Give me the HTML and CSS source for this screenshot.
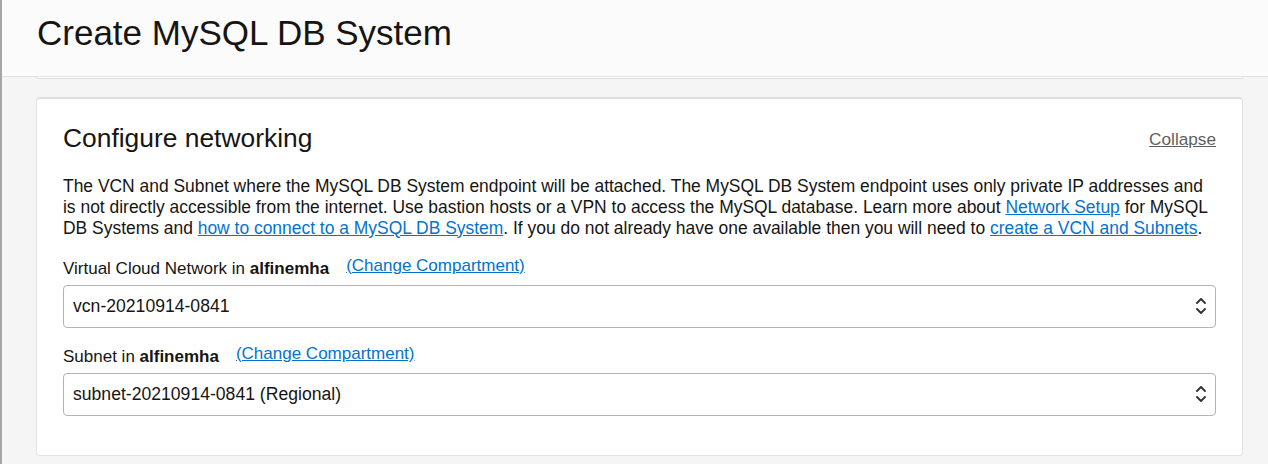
FILE: index.html
```html
<!DOCTYPE html>
<html lang="en">
<head>
<meta charset="utf-8">
<title>Create MySQL DB System</title>
<link rel="stylesheet" href="styles.css">
</head>
<body>
<div class="page">
  <header class="header">
    <h1 class="title">Create MySQL DB System</h1>
  </header>
  <main class="content">
    <div class="prev-card"></div>
    <section class="card">
      <div class="card-head">
        <h2 class="card-title">Configure networking</h2>
        <a class="collapse" href="#">Collapse</a>
      </div>
      <p class="desc">The VCN and Subnet where the MySQL DB System endpoint will be attached. The MySQL DB System endpoint uses only private IP addresses and is not directly accessible from the internet. Use bastion hosts or a VPN to access the MySQL database. Learn more about <a href="#" class="link">Network Setup</a> for MySQL DB Systems and <a href="#" class="link">how to connect to a MySQL DB System</a>. If you do not already have one available then you will need to <a href="#" class="link">create a VCN and Subnets</a>.</p>

      <div class="field">
        <div class="label-row">
          <span class="label">Virtual Cloud Network in <b>alfinemha</b></span>
          <a href="#" class="link change">(Change Compartment)</a>
        </div>
        <div class="select">
          <span class="select-value">vcn-20210914-0841</span>
          <svg class="chev" width="12" height="18" viewBox="0 0 12 18"><path d="M2 6 L6 2 L10 6 M2 12 L6 16 L10 12" fill="none" stroke="#333" stroke-width="1.9" stroke-linecap="round" stroke-linejoin="round"/></svg>
        </div>
      </div>

      <div class="field">
        <div class="label-row">
          <span class="label">Subnet in <b>alfinemha</b></span>
          <a href="#" class="link change">(Change Compartment)</a>
        </div>
        <div class="select">
          <span class="select-value">subnet-20210914-0841 (Regional)</span>
          <svg class="chev" width="12" height="18" viewBox="0 0 12 18"><path d="M2 6 L6 2 L10 6 M2 12 L6 16 L10 12" fill="none" stroke="#333" stroke-width="1.9" stroke-linecap="round" stroke-linejoin="round"/></svg>
        </div>
      </div>
    </section>
  </main>
</div>
</body>
</html>
```

FILE: styles.css
```css
html, body {
  margin: 0;
  padding: 0;
  height: 100%;
}
body {
  background: #f5f5f5;
  font-family: "Liberation Sans", Arial, sans-serif;
  color: #161513;
  overflow: hidden;
}
.page {
  border-left: 2px solid #a6a6a6;
  min-height: 100%;
  box-sizing: border-box;
}
.header {
  height: 76px;
  background: #fbfbfb;
  border-bottom: 1px solid #e2e2e2;
  padding-left: 35px;
  box-sizing: content-box;
}
.title {
  margin: 0;
  padding-top: 13px;
  font-size: 35px;
  font-weight: normal;
  line-height: 40px;
  color: #161513;
}
.content {
  padding: 0 25px 0 34px;
}
.prev-card {
  height: 1px;
  background: #fff;
  border: 1px solid #e0e0e0;
  border-top: none;
  border-radius: 0 0 3px 3px;
}
.card {
  margin-top: 18px;
  background: #fff;
  border: 1px solid #e3e3e3;
  border-top: 2px solid #e0e0e0;
  border-radius: 4px;
  padding: 24px 26px 39px 26px;
}
.card-head {
  display: flex;
  justify-content: space-between;
  align-items: center;
}
.card-title {
  margin: 0;
  font-size: 26.4px;
  font-weight: normal;
  line-height: 31.7px;
}
.collapse {
  color: #5f5f5f;
  font-size: 17.2px;
  text-decoration: underline;
  margin-top: 2px;
}
.desc {
  margin: 21px 0 0 0;
  font-size: 17.45px;
  line-height: 21px;
}
.link {
  color: #0572ce;
  text-decoration: underline;
}
.field {
  margin-top: 20px;
}
.field + .field {
  margin-top: 19px;
}
.label-row {
  display: flex;
  align-items: flex-end;
  gap: 17px;
  height: 20px;
  margin-bottom: 6px;
}
.label {
  font-size: 17px;
  line-height: 20px;
}
.label b {
  font-weight: bold;
}
.change {
  font-size: 17px;
  line-height: 20px;
  margin-bottom: 3px;
}
.select {
  height: 43px;
  box-sizing: border-box;
  border: 1px solid #b4b4b8;
  border-radius: 4px;
  display: flex;
  align-items: center;
  justify-content: space-between;
  padding: 0 8px 0 9px;
}
.select-value {
  font-size: 17.6px;
}
.chev {
  display: block;
}
```
